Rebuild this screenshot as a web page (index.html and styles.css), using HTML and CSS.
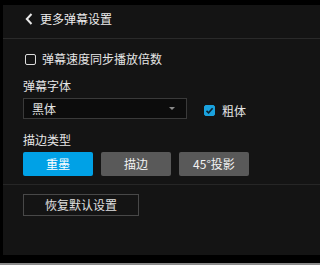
FILE: index.html
```html
<!DOCTYPE html>
<html>
<head>
<meta charset="utf-8">
<link rel="stylesheet" href="styles.css">
</head>
<body>
<div class="frame">
  <div class="top">
    <div class="panel">
      <div class="header">
        <svg class="chev" width="8" height="12" viewBox="0 0 8 12"><path d="M6.5 1 L1.8 6 L6.5 11" fill="none" stroke="#e8e8e8" stroke-width="2"/></svg>
        <span>更多弹幕设置</span>
      </div>
      <div class="section">
        <div class="row check-row">
          <span class="box"></span>
          <span>弹幕速度同步播放倍数</span>
        </div>
        <div class="label l1">弹幕字体</div>
        <div class="font-row">
          <div class="select">
            <span>黑体</span>
            <span class="arrow"></span>
          </div>
          <div class="row bold">
            <span class="box checked">
              <svg width="9" height="9" viewBox="0 0 9 9"><path d="M1.5 4.8 L3.6 6.8 L7.6 2.3" fill="none" stroke="#0b2230" stroke-width="1.6"/></svg>
            </span>
            <span>粗体</span>
          </div>
        </div>
        <div class="label l2">描边类型</div>
        <div class="btns">
          <div class="btn active">重墨</div>
          <div class="btn">描边</div>
          <div class="btn">45°投影</div>
        </div>
      </div>
      <div class="reset">恢复默认设置</div>
    </div>
  </div>
  <div class="foot"></div>
</div>
</body>
</html>
```
FILE: styles.css
```css
html, body {
  margin: 0;
  padding: 0;
  background: #000;
}
body {
  height: 265px;
  overflow: hidden;
  font-family: "Noto Sans CJK SC", "Noto Sans", sans-serif;
  font-size: 12px;
  color: #e6e6e6;
}
.frame {
  display: flex;
  flex-direction: column;
}
.top {
  display: flex;
  height: 255px;
}
.panel {
  flex: 1;
  margin-left: 3px;
  margin-top: 5px;
  background: #141414;
  display: flex;
  flex-direction: column;
}
.header {
  display: flex;
  align-items: center;
  gap: 7px;
  padding: 6px 0 11px 22px;
  height: 16px;
  line-height: 16px;
  border-bottom: 1px solid #2a2a2a;
  color: #ececec;
}
.chev {
  display: block;
}
.section {
  padding: 0 0 8px 20px;
  border-bottom: 1px solid #262626;
}
.row {
  display: flex;
  align-items: center;
  line-height: 16px;
}
.check-row {
  margin-top: 12px;
  gap: 6px;
}
.box {
  width: 9px;
  height: 9px;
  border: 1px solid #dcdcdc;
  border-radius: 2px;
  margin-left: 2px;
  display: flex;
  align-items: center;
  justify-content: center;
}
.box.checked {
  background: #1aa2de;
  border-color: #1aa2de;
  margin-left: 0;
}
.label {
  line-height: 16px;
}
.l1 { margin-top: 11px; }
.l2 { margin-top: 13px; }
.font-row {
  margin-top: 4px;
  display: flex;
  align-items: center;
}
.select {
  width: 143px;
  height: 19px;
  border: 1px solid #3a3a3a;
  background: #0c0c0c;
  display: flex;
  align-items: center;
  justify-content: space-between;
  padding: 0 11px 0 8px;
  line-height: 16px;
}
.arrow {
  width: 0;
  height: 0;
  border-left: 3px solid transparent;
  border-right: 3px solid transparent;
  border-top: 3px solid #8a8a8a;
}
.bold {
  margin-left: 17px;
  margin-top: 4px;
  gap: 7px;
}
.btns {
  margin-top: 4px;
  display: flex;
  gap: 8px;
}
.btn {
  width: 70px;
  height: 24px;
  line-height: 24px;
  text-align: center;
  background: #595959;
  border-radius: 2px;
  color: #f2f2f2;
}
.btn.active {
  background: #00a1e6;
  color: #fff;
}
.reset {
  margin: 9px 0 0 20px;
  width: 114px;
  height: 20px;
  line-height: 20px;
  border: 1px solid #484848;
  text-align: center;
  color: #e0e0e0;
}
.foot {
  margin-top: 8px;
  height: 2px;
  background: #8c8c8c;
}
```
